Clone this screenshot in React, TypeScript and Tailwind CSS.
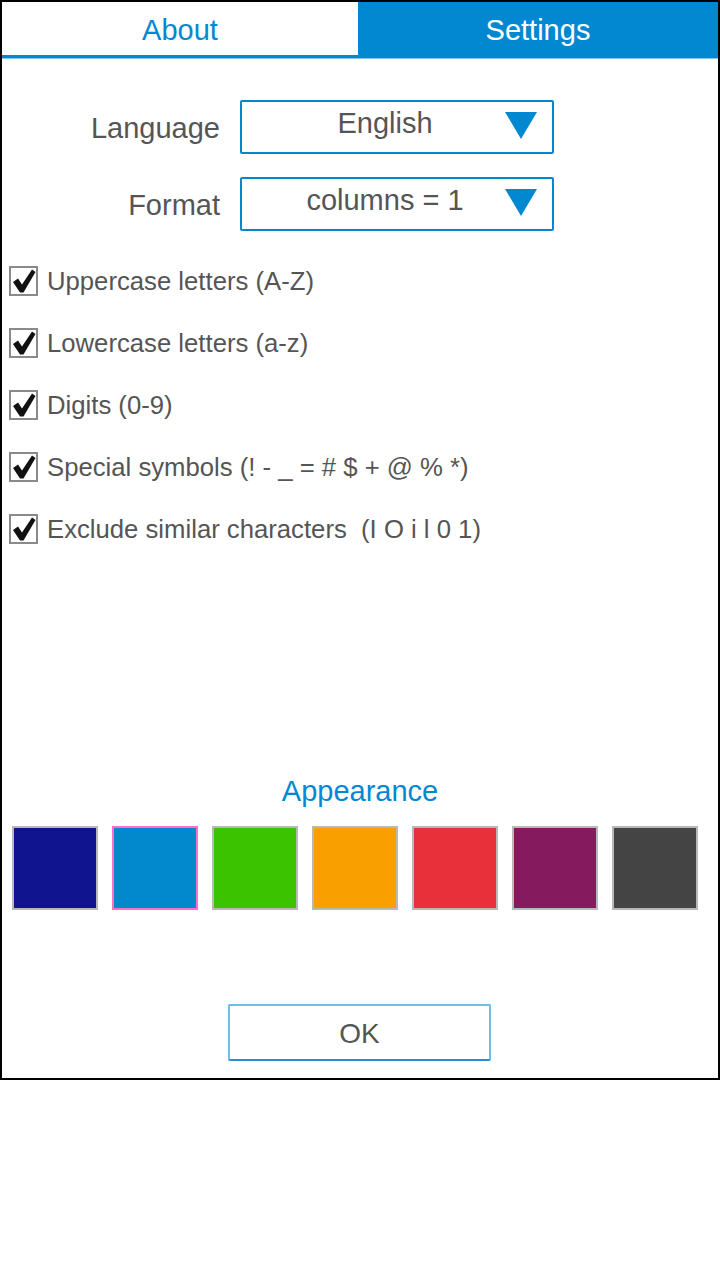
import React, { useState } from 'react';

const BLUE = '#0288d1';

const options = [
  'Uppercase letters (A-Z)',
  'Lowercase letters (a-z)',
  'Digits (0-9)',
  'Special symbols (! - _ = # $ + @ % *)',
  'Exclude similar characters  (I O i l 0 1)',
];

const swatches = ['#10158f', '#0288cc', '#3cc300', '#f9a000', '#e8303a', '#861a5f', '#444444'];

function Select({ value }: { value: string }) {
  return (
    <div className="relative flex h-[54px] w-[314px] items-center border-2 border-[#0288d1] rounded-[2px] bg-white">
      <span className="flex-1 pr-[24px] pb-[6px] text-center text-[29px] text-[#555]">{value}</span>
      <svg className="absolute right-[15px] top-[10px]" width="32" height="27" viewBox="0 0 32 27">
        <polygon points="0,0 32,0 16,27" fill={BLUE} />
      </svg>
    </div>
  );
}

function Checkbox({ label, checked }: { label: string; checked: boolean }) {
  return (
    <div className="flex h-[62px] items-center">
      <div className="relative ml-[7px] h-[30px] w-[29px] border-2 border-[#8a8a8a] bg-white">
        {checked && (
          <svg className="absolute left-[1px] top-[1px]" width="24" height="24" viewBox="0 0 24 24">
            <path d="M1 13 L6 9.5 L10 15.5 L20 0.5 L23.5 3 L11.5 23.5 L8 23.5 Z" fill="#111" />
          </svg>
        )}
      </div>
      <span className="ml-[9px] text-[25.7px] text-[#555] whitespace-pre">{label}</span>
    </div>
  );
}

export default function App() {
  const [selected, setSelected] = useState(1);

  return (
    <div className="font-['Liberation_Sans',Arial,sans-serif]">
      <div className="flex h-[1080px] w-[720px] flex-col border-2 border-black bg-white">
        <div className="flex h-[53px]">
          <div className="flex w-[356px] items-center justify-center pt-[4px] text-[29px] text-[#0288d1]">About</div>
          <div className="flex flex-1 items-center justify-center bg-[#0288d1] pt-[4px] text-[29px] text-white">Settings</div>
        </div>
        <div className="h-[4px] bg-[#0288d1] border-b border-[#7fc4ea]" />

        <div className="mt-[41px] flex items-center">
          <span className="w-[218px] pt-[4px] text-right text-[29px] text-[#555]">Language</span>
          <div className="ml-[20px]">
            <Select value="English" />
          </div>
        </div>
        <div className="mt-[23px] flex items-center">
          <span className="w-[218px] pt-[4px] text-right text-[29px] text-[#555]">Format</span>
          <div className="ml-[20px]">
            <Select value="columns = 1" />
          </div>
        </div>

        <div className="mt-[19px] flex flex-col">
          {options.map((o) => (
            <Checkbox key={o} label={o} checked />
          ))}
        </div>

        <div className="mt-[214px] text-center text-[29px] leading-[34px] text-[#0288d1]">Appearance</div>

        <div className="mt-[18px] flex gap-[14px] pl-[10px]">
          {swatches.map((c, i) => (
            <button
              key={c}
              onClick={() => setSelected(i)}
              className={
                'h-[84px] w-[86px] border-2 ' +
                (i === selected ? 'border-[#ff6fc8]' : 'border-[#b8b8b8]')
              }
              style={{ backgroundColor: c }}
            />
          ))}
        </div>

        <div className="mt-[94px] flex justify-center">
          <button className="ml-[-1px] h-[57px] w-[263px] rounded-[2px] border-2 border-[#6cc0ee] border-b-[#2a8fce] pt-[2px] text-[28px] text-[#555]">
            OK
          </button>
        </div>
      </div>
    </div>
  );
}
